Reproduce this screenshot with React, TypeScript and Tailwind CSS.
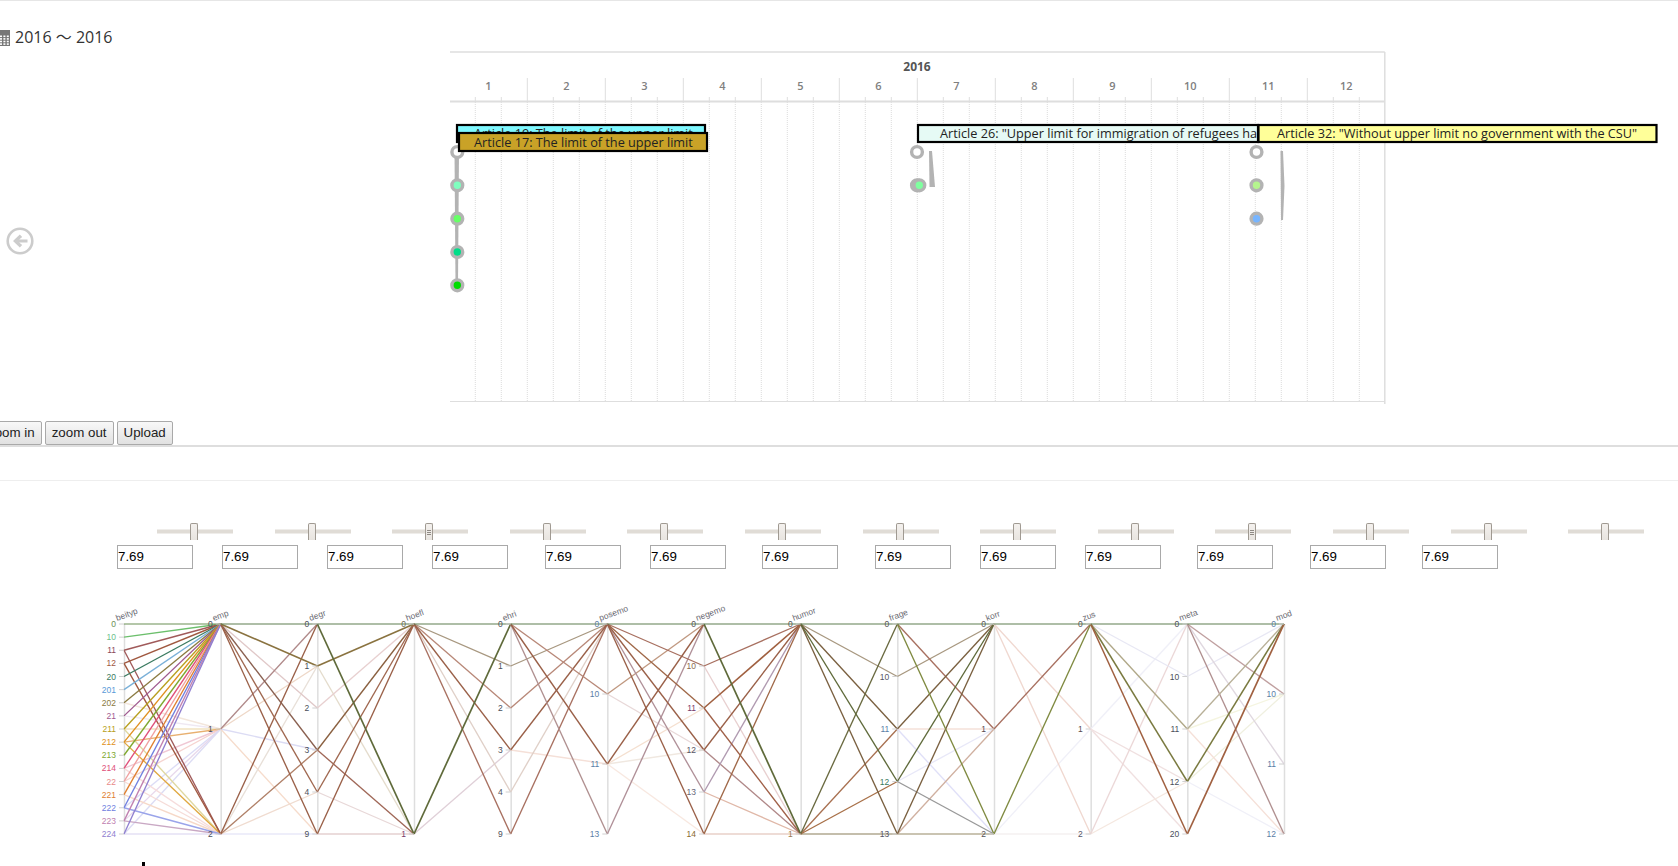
import { Fragment } from "react";

type Link = [string, string, string, number?];

interface Axis {
  name: string;
  ticks: string[];
  tickColors?: string[];
  labelColor?: string;
}

const BLUE = "#5a7ea6";
const DARK = "#4a4f5a";

const axes: Axis[] = [
  {
    name: "beityp",
    ticks: ["0", "10", "11", "12", "20", "201", "202", "21", "211", "212", "213", "214", "22", "221", "222", "223", "224"],
    tickColors: ["#6a8f55", "#6cbf8c", "#8a4a5a", "#a0583f", "#3a7a60", "#5a9ad8", "#8a7a40", "#a05a90", "#b8a020", "#e09020", "#80a830", "#e0507a", "#e88a8a", "#e08030", "#7080e0", "#c080b0", "#9080d0"],
  },
  { name: "emp", ticks: ["0", "1", "2"], labelColor: DARK },
  { name: "degr", ticks: ["0", "1", "2", "3", "4", "9"], labelColor: DARK },
  { name: "hoefl", ticks: ["0", "1"], tickColors: ["#6a6a50", "#7a3a6a"] },
  { name: "ehri", ticks: ["0", "1", "2", "3", "4", "9"], labelColor: DARK },
  { name: "posemo", ticks: ["0", "10", "11", "13"], labelColor: BLUE },
  { name: "negemo", ticks: ["0", "10", "11", "12", "13", "14"], tickColors: ["#555", "#8a6a50", "#7a3a6a", "#556", "#667", "#8a6a30"] },
  { name: "humor", ticks: ["0", "1"], tickColors: ["#555", "#9a7a50"] },
  { name: "frage", ticks: ["0", "10", "11", "12", "13"], tickColors: ["#555", "#556", BLUE, "#3a7a60", "#556"] },
  { name: "korr", ticks: ["0", "1", "2"], tickColors: ["#555", "#5a4a50", "#555"] },
  { name: "zus", ticks: ["0", "1", "2"], tickColors: ["#555", "#5a4a50", "#556"] },
  { name: "meta", ticks: ["0", "10", "11", "12", "20"], labelColor: DARK },
  { name: "mod", ticks: ["0", "10", "11", "12"], labelColor: BLUE },
];

const links: Link[][] = [
  [
    ["202", "1", "#f3e6dc"], ["21", "1", "#efe8f2"], ["211", "1", "#f0e2c0"], ["214", "1", "#f0c8d4"], ["22", "1", "#f6d4d0"],
    ["222", "1", "#dcdcf6"], ["223", "1", "#e8d8ec"], ["224", "1", "#dcdcf4"], ["211", "2", "#e0d8a0"], ["214", "2", "#f6dcdc"],
    ["22", "2", "#f6dcd8"], ["221", "2", "#f6d8c8"], ["223", "2", "#c9a8c4"], ["224", "2", "#e4e0f4"], ["212", "1", "#e8b070"],
    ["212", "2", "#e0a840"], ["222", "2", "#9aa4ea"], ["11", "2", "#a05a5a"], ["12", "2", "#a0583f"],
    ["10", "0", "#6cbf6c"], ["11", "0", "#a05a5a"], ["12", "0", "#a0583f"], ["20", "0", "#3a7a60"], ["201", "0", "#7ab0d8"],
    ["202", "0", "#8a7a40"], ["21", "0", "#a05a90"], ["211", "0", "#b8a020"], ["212", "0", "#e09020"], ["213", "0", "#80a830"],
    ["214", "0", "#e0507a"], ["22", "0", "#f0a0a0"], ["221", "0", "#e08030"], ["222", "0", "#7080e0"], ["223", "0", "#c080b0"],
    ["224", "0", "#9080d0"], ["0", "0", "#6a8f55", 1.1],
  ],
  [
    ["1", "9", "#f6dccc"], ["1", "3", "#dcdcf4"], ["2", "9", "#e8e8f8"], ["2", "4", "#f0dcd0"], ["2", "1", "#e8e0d8"],
    ["1", "1", "#eed8c8"], ["0", "2", "#e0c8c8"], ["1", "0", "#b08a8a"], ["2", "3", "#b08068"], ["2", "0", "#9a6048"],
    ["0", "3", "#8a6050"], ["0", "4", "#a06850"], ["0", "9", "#9a6048"], ["0", "1", "#8a7340", 1.6], ["0", "0", "#5f7f50", 1.1],
  ],
  [
    ["1", "1", "#e4dccc"], ["2", "0", "#e8d0d0"], ["4", "1", "#e8d8d8"], ["9", "1", "#e4d0d0", 1.3], ["3", "1", "#a06858"],
    ["3", "0", "#8a6040"], ["4", "0", "#a06850"], ["9", "0", "#9a6048"], ["1", "0", "#8a7340", 1.6], ["0", "1", "#5f6a3a", 1.7],
    ["0", "0", "#5f7f50", 1.1],
  ],
  [
    ["1", "3", "#e0d0d8"], ["0", "4", "#e0d0c8"], ["0", "1", "#a89880"], ["0", "2", "#b88878"], ["0", "9", "#a87060"],
    ["0", "3", "#9a6048"], ["1", "0", "#5f6a3a", 1.7], ["0", "0", "#5f7f50", 1.1],
  ],
  [
    ["3", "11", "#f5e0d8"], ["4", "0", "#e0d0c8"], ["1", "0", "#a89880"], ["2", "0", "#b88878"], ["9", "0", "#a87060"],
    ["3", "0", "#9a6048"], ["0", "10", "#b88878"], ["0", "13", "#b09090"], ["0", "11", "#9a6048"], ["0", "0", "#5f7f50", 1.1],
  ],
  [
    ["11", "14", "#f8e8e0"], ["11", "12", "#f0e8e0"], ["11", "11", "#f5e0d0"], ["10", "12", "#e8d8d8"], ["10", "0", "#c09880"],
    ["13", "0", "#b09098"], ["0", "13", "#b09098"], ["0", "10", "#a87060"], ["0", "11", "#a06848"], ["0", "12", "#9a6048"],
    ["0", "14", "#9a6048"], ["11", "0", "#9a6048"], ["0", "0", "#5f7f50", 1.1],
  ],
  [
    ["10", "1", "#e8d0d0"], ["14", "1", "#e8d0c8", 1.3], ["13", "1", "#e0b8a8"], ["12", "1", "#b08888"], ["13", "0", "#b09ab0"],
    ["11", "1", "#a06048"], ["10", "0", "#a87060"], ["11", "0", "#a06040", 1.6], ["12", "0", "#9a6048"], ["14", "0", "#a06848"],
    ["0", "1", "#5f6a3a", 1.7], ["0", "0", "#5f7f50", 1.1],
  ],
  [
    ["1", "13", "#b0a890", 1.3], ["0", "10", "#a89880"], ["1", "11", "#a87050"], ["1", "12", "#a87048"], ["0", "11", "#7a6040"],
    ["0", "13", "#7a6040"], ["1", "0", "#6a6a40"], ["0", "12", "#5f6a3a"], ["0", "0", "#5f7f50", 1.1],
  ],
  [
    ["11", "1", "#f5e0d8"], ["11", "2", "#e0e0f8"], ["12", "1", "#e8e8f8"], ["13", "2", "#b8b098", 1.3], ["13", "1", "#d0b0a0"],
    ["12", "2", "#999999"], ["10", "0", "#a89880"], ["0", "1", "#a87060"], ["11", "0", "#7a6040"], ["13", "0", "#7a6040"],
    ["12", "0", "#5f6a3a"], ["0", "2", "#7f8a40"], ["0", "0", "#5f7f50", 1.1],
  ],
  [
    ["2", "2", "#f5f0f0"], ["2", "1", "#f0f0f8"], ["0", "1", "#f0d8d0"], ["0", "2", "#f0d8d0"], ["1", "0", "#a87060"],
    ["2", "0", "#7f8a40"], ["0", "0", "#5f7f50", 1.1],
  ],
  [
    ["1", "0", "#f0f0f8"], ["1", "12", "#f0e0e0"], ["1", "20", "#f0e0e0"], ["2", "12", "#f5e8e0"], ["2", "0", "#ecd8d8"],
    ["0", "10", "#e8e8f4"], ["0", "11", "#b0a888"], ["0", "12", "#7a7a40", 1.5], ["0", "20", "#a06040", 1.5], ["0", "0", "#5f7f50", 1.1],
  ],
  [
    ["12", "12", "#f0f0f8"], ["12", "10", "#f0f0e0"], ["11", "10", "#f5f5e0"], ["11", "12", "#f5e0d8"], ["10", "0", "#e8e8f4"],
    ["0", "11", "#e0d8e0"], ["0", "10", "#c0a0a0"], ["0", "12", "#b09090"], ["11", "0", "#b8b098"], ["12", "0", "#7a7a40", 1.5],
    ["20", "0", "#a06040", 1.7], ["0", "0", "#5f7f50", 1.1],
  ],
];

const CHART_TOP = 624;
const CHART_HEIGHT = 210;
const axisX = (i: number) => 124 + (1160 / 12) * i;
const tickY = (axis: Axis, tick: string) => CHART_TOP + (axis.ticks.indexOf(tick) * CHART_HEIGHT) / (axis.ticks.length - 1);

const ParallelChart = () => (
  <svg width={1200} height={250} viewBox="100 600 1200 250" className="block">
    {axes.map((axis, i) => (
      <line key={axis.name} x1={axisX(i) + 0.5} x2={axisX(i) + 0.5} y1={CHART_TOP} y2={CHART_TOP + CHART_HEIGHT} stroke="#dedede" strokeWidth={1.5} />
    ))}
    {links.map((group, i) =>
      group.map(([from, to, color, width], j) => (
        <line
          key={`${i}-${j}`}
          x1={axisX(i)}
          y1={tickY(axes[i], from)}
          x2={axisX(i + 1)}
          y2={tickY(axes[i + 1], to)}
          stroke={color}
          strokeWidth={width ?? 1.35}
        />
      )),
    )}
    {axes.map((axis, i) => (
      <Fragment key={axis.name}>
        {axis.ticks.map((tick, t) => {
          const y = tickY(axis, tick);
          return (
            <Fragment key={tick}>
              <line x1={axisX(i) - 5} x2={axisX(i)} y1={y} y2={y} stroke="#d0d0d0" />
              <text
                x={axisX(i) - 8}
                y={y + 3}
                textAnchor="end"
                fontSize={8.5}
                fill={axis.tickColors ? axis.tickColors[t] : axis.labelColor}
                className="font-['Liberation_Sans',sans-serif]"
              >
                {tick}
              </text>
            </Fragment>
          );
        })}
        <text
          transform={`translate(${axisX(i) - 7} 621) rotate(-20)`}
          fontSize={8.5}
          fill="#6a6a72"
          className="font-['Liberation_Sans',sans-serif]"
        >
          {axis.name}
        </text>
      </Fragment>
    ))}
  </svg>
);

const MONTHS = [1, 2, 3, 4, 5, 6, 7, 8, 9, 10, 11, 12];
const TL_LEFT = 449.3;
const MONTH_W = 78;
const TL_RIGHT = TL_LEFT + 12 * MONTH_W - 0.5;

const EventBox = ({ x, y, w, h, fill, label, textX }: { x: number; y: number; w: number; h: number; fill: string; label: string; textX: number }) => (
  <g>
    <rect x={x} y={y} width={w} height={h} fill={fill} stroke="#000" strokeWidth={2.2} />
    <text x={textX} y={y + h / 2 + 4.5} fontSize={12.7} fill="#222">
      {label}
    </text>
  </g>
);

const Dot = ({ x, y, fill }: { x: number; y: number; fill: string }) => (
  <circle cx={x} cy={y} r={5.4} fill={fill} stroke="#b3b3b3" strokeWidth={3.4} />
);

const Timeline = () => (
  <svg width={1228} height={360} viewBox="450 50 1228 360" className="block font-['Open_Sans',sans-serif]">
    <line x1={450} x2={TL_RIGHT} y1={52} y2={52} stroke="#dedede" strokeWidth={1.5} />
    <line x1={TL_RIGHT} x2={TL_RIGHT} y1={52} y2={404} stroke="#dedede" strokeWidth={1.5} />
    <line x1={450} x2={TL_RIGHT} y1={401.5} y2={401.5} stroke="#dedede" />
    <line x1={450} x2={TL_RIGHT} y1={101.5} y2={101.5} stroke="#dedede" strokeWidth={2} />
    <text x={917} y={71} textAnchor="middle" fontSize={12} fontWeight={700} fill="#555">
      2016
    </text>
    {MONTHS.map((month) => {
      const left = TL_LEFT + (month - 1) * MONTH_W;
      return (
        <Fragment key={month}>
          <text x={left + 39} y={90} textAnchor="middle" fontSize={11} fontWeight={600} fill="#808080">
            {month}
          </text>
          {month > 1 && <line x1={left} x2={left} y1={78} y2={101} stroke="#dedede" />}
          {month > 1 && <line x1={left} x2={left} y1={102} y2={401} stroke="#dcdcdc" strokeDasharray="1 1" />}
          <line x1={left + 26} x2={left + 26} y1={97} y2={101} stroke="#dedede" />
          <line x1={left + 52} x2={left + 52} y1={97} y2={101} stroke="#dedede" />
          <line x1={left + 26} x2={left + 26} y1={102} y2={401} stroke="#dcdcdc" strokeDasharray="1 1" />
          <line x1={left + 52} x2={left + 52} y1={102} y2={401} stroke="#dcdcdc" strokeDasharray="1 1" />
        </Fragment>
      );
    })}

    <polygon points="454.5,152 459,152 458,285 455.5,285" fill="#b3b3b3" />
    <Dot x={457.3} y={152} fill="#fff" />
    <Dot x={457.3} y={185.3} fill="#7fffbf" />
    <Dot x={457.3} y={218.7} fill="#66ff66" />
    <Dot x={457.3} y={252} fill="#00dd88" />
    <Dot x={457.3} y={285.3} fill="#00dd00" />

    <polygon points="929,151 932,151 935,187 929.5,187" fill="#b3b3b3" />
    <Dot x={917} y={152} fill="#fff" />
    <Dot x={917} y={185.3} fill="#b3b3b3" />
    <Dot x={919.3} y={185.3} fill="#7fff9f" />

    <polygon points="1280.5,151 1283,151 1284.5,186 1283,220 1281,220" fill="#b3b3b3" />
    <Dot x={1256.5} y={152} fill="#fff" />
    <Dot x={1256.5} y={185.3} fill="#b5f58e" />
    <Dot x={1256.5} y={218.7} fill="#77b5ff" />

    <EventBox x={457} y={125} w={248} h={17} fill="#7ff8ff" label="Article 19: The limit of the upper limit" textX={474} />
    <EventBox x={459} y={133} w={248} h={18} fill="#c9a227" label="Article 17: The limit of the upper limit" textX={474} />
    <EventBox x={918} y={125} w={340} h={17} fill="#e6faf5" label={'Article 26: "Upper limit for immigration of refugees ha'} textX={940} />
    <EventBox x={1258.5} y={125} w={398} h={17} fill="#ffff99" label={'Article 32: "Without upper limit no government with the CSU"'} textX={1277} />
  </svg>
);

const SLIDER_GRIPS = [2, 9];

const Slider = ({ grip }: { grip: boolean }) => (
  <div className="relative flex h-[17px] w-[76px] shrink-0 items-center">
    <div className="h-1 w-full translate-y-[-0.5px] bg-[#e0dcd6]" />
    <div className="absolute top-0 left-[calc(50%-1px)] flex h-[17px] w-2 -translate-x-1/2 flex-col items-center justify-center gap-px rounded-t-[2px] border-x border-t border-[#a09a92] bg-gradient-to-b from-[#f4f1ee] to-[#e8e4df]">
      {grip && (
        <>
          <span className="h-px w-1 bg-[#8f8a84]" />
          <span className="h-px w-1 bg-[#8f8a84]" />
          <span className="h-px w-1 bg-[#8f8a84]" />
        </>
      )}
    </div>
  </div>
);

const INPUT_GAPS = [
  "ml-[117px]", "ml-[29px]", "ml-[29px]", "ml-[29px]", "ml-[37px]", "ml-[29px]", "ml-[36px]",
  "ml-[37px]", "ml-[29px]", "ml-[29px]", "ml-[36px]", "ml-[37px]", "ml-[36px]",
];

const ToolButton = ({ children, className = "" }: { children: string; className?: string }) => (
  <button
    type="button"
    className={`h-6 rounded-[2px] border border-[#a9a9a9] bg-gradient-to-b from-[#f8f8f8] to-[#e1e1e1] px-1.5 text-[13.33px] text-[#222] ${className}`}
  >
    {children}
  </button>
);

const App = () => {
  return (
    <div className="h-[866px] w-[1678px] overflow-hidden border-t border-[#e6e6e6] bg-white font-['Liberation_Sans',sans-serif]">
      <div className="flex h-[420px]">
        <div className="w-[450px] shrink-0 pt-[26px]">
          <div className="flex h-5 items-center font-['Open_Sans','Noto_Sans_CJK_SC',sans-serif] text-base text-[#333]">
            <svg width={10} height={17} viewBox="0 0 10 17" className="mr-[5px] shrink-0">
              <rect x={-6} y={3} width={16} height={14} fill="#777" />
              <rect x={-6} y={1} width={16} height={3} fill="#777" />
              {[0, 1, 2, 3].map((row) =>
                [0, 3.4, 6.8].map((col) => (
                  <rect key={`${row}-${col}`} x={col} y={6.5 + row * 2.6} width={2} height={1.6} fill="#fff" />
                )),
              )}
            </svg>
            <span>2016 〜 2016</span>
          </div>
          <svg width={28} height={28} viewBox="0 0 28 28" className="mt-[180px] ml-1.5">
            <circle cx={14} cy={14} r={12.3} fill="none" stroke="#cccccc" strokeWidth={2.6} />
            <path d="M7 14 L13.8 7.5 L16.2 9.9 L13.2 12.4 H21.5 V15.6 H13.2 L16.2 18.1 L13.8 20.5 Z" fill="#cccccc" />
          </svg>
        </div>
        <div className="pt-[49px]">
          <Timeline />
        </div>
      </div>

      <div className="flex h-6 items-center gap-[3px]">
        <ToolButton className="-ml-[19px]">zoom in</ToolButton>
        <ToolButton>zoom out</ToolButton>
        <ToolButton>Upload</ToolButton>
      </div>
      <div className="h-0.5 bg-[#dedede]" />
      <div className="mt-[33px] h-px bg-[#eeeeee]" />

      <div className="mt-[42px] ml-[157px] flex gap-[41.6px]">
        {INPUT_GAPS.map((_, i) => (
          <Slider key={i} grip={SLIDER_GRIPS.includes(i)} />
        ))}
      </div>

      <div className="mt-[5px] flex">
        {INPUT_GAPS.map((gap, i) => (
          <input
            key={i}
            readOnly
            defaultValue="7.69"
            className={`h-6 w-[76px] shrink-0 border border-[#a9a9a9] pb-0.5 text-[13.33px] text-black outline-none ${gap}`}
          />
        ))}
      </div>

      <div className="mt-[31px] ml-[100px]">
        <ParallelChart />
      </div>
      <div className="mt-3 ml-[142px] h-[5px] w-[3px] bg-black" />
    </div>
  );
};

export default App;
